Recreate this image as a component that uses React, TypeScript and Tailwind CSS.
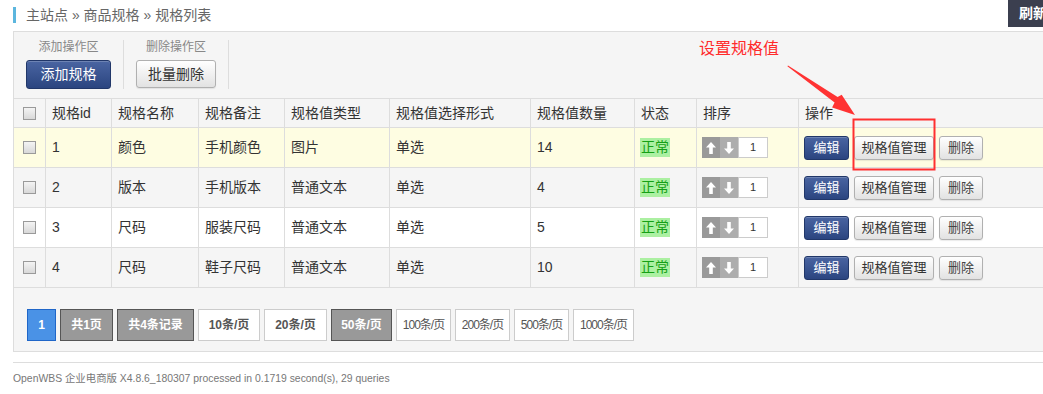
import React from "react";

type Row = {
  id: number;
  name: string;
  note: string;
  type: string;
  mode: string;
  count: number;
  bg: string;
};

const rows: Row[] = [
  { id: 1, name: "颜色", note: "手机颜色", type: "图片", mode: "单选", count: 14, bg: "bg-[#fefde2]" },
  { id: 2, name: "版本", note: "手机版本", type: "普通文本", mode: "单选", count: 4, bg: "bg-[#f5f5f5]" },
  { id: 3, name: "尺码", note: "服装尺码", type: "普通文本", mode: "单选", count: 5, bg: "bg-white" },
  { id: 4, name: "尺码", note: "鞋子尺码", type: "普通文本", mode: "单选", count: 10, bg: "bg-[#f5f5f5]" },
];

// column widths incl. the right border line
const cols = ["w-[32px]", "w-[66px]", "w-[87px]", "w-[86px]", "w-[105px]", "w-[141px]", "w-[104px]", "w-[62px]", "w-[102px]", "flex-1"];
const heads = ["", "规格id", "规格名称", "规格备注", "规格值类型", "规格值选择形式", "规格值数量", "状态", "排序", "操作"];

function Checkbox() {
  return (
    <span className="block w-[13px] h-[13px] border border-[#9a9a9a] bg-linear-to-b from-[#f4f4f4] to-[#d8d8d8]" />
  );
}

function Arrow({ up }: { up?: boolean }) {
  return (
    <svg width="10" height="12" viewBox="0 0 10 12" className={up ? "" : "rotate-180"}>
      <path d="M5 0 L10 5.5 L6.8 5.5 L6.8 12 L3.2 12 L3.2 5.5 L0 5.5 Z" fill="#fff" />
    </svg>
  );
}

function BlueBtn({ children, className = "" }: { children: React.ReactNode; className?: string }) {
  return (
    <button className={`rounded-[3px] border border-[#213769] bg-linear-to-b from-[#4a65a2] to-[#2b4580] text-white shadow-[inset_0_1px_0_rgba(255,255,255,0.2)] ${className}`}>
      {children}
    </button>
  );
}

function GrayBtn({ children, className = "" }: { children: React.ReactNode; className?: string }) {
  return (
    <button className={`rounded-[3px] border border-[#b0b0b0] bg-linear-to-b from-white to-[#e2e2e2] text-[#333] shadow-[0_1px_1px_rgba(0,0,0,0.08)] ${className}`}>
      {children}
    </button>
  );
}

export default function App() {
  return (
    <div className="relative w-[1043px] h-[394px] overflow-hidden bg-white text-[#333] font-['Liberation_Sans','Noto_Sans_CJK_SC',sans-serif]">
      {/* Breadcrumb */}
      <div className="flex justify-between h-[31px]">
        <div className="flex items-center pl-[13px] pb-[1px]">
          <span className="w-[3px] h-[16px] bg-[#5cb6de]" />
          <span className="ml-[10px] text-[14px] text-[#666]">主站点 » 商品规格 » 规格列表</span>
        </div>
        <div className="h-[27px] w-[35px] overflow-hidden bg-[#3b3f4f] pl-[11px] text-[14px] font-bold leading-[27px] text-white whitespace-nowrap">
          刷新
        </div>
      </div>

      {/* Main box */}
      <div className="ml-[13px] w-[1100px] border-t border-l border-b border-[#ddd] bg-[#f5f5f5]">
        {/* Toolbar */}
        <div className="flex h-[67px] border-b border-[#ddd] pt-[8px]">
          <div className="flex flex-col items-center px-[12px]">
            <span className="text-[12px] leading-[14px] text-[#888]">添加操作区</span>
            <BlueBtn className="mt-[6px] h-[29px] w-[85px] text-[14px]">添加规格</BlueBtn>
          </div>
          <div className="w-px h-[49px] bg-[#ddd]" />
          <div className="flex flex-col items-center px-[12px]">
            <span className="text-[12px] leading-[14px] text-[#888]">删除操作区</span>
            <GrayBtn className="mt-[6px] h-[28px] w-[80px] text-[14px]">批量删除</GrayBtn>
          </div>
          <div className="w-px h-[49px] bg-[#ddd]" />
        </div>

        {/* Table header */}
        <div className="flex h-[29px] border-b border-[#ddd] text-[14px]">
          {heads.map((h, i) => (
            <div key={i} className={`${cols[i]} flex items-center border-r border-[#ddd] ${i === 0 ? "justify-center" : "pl-[6px]"}`}>
              {i === 0 ? <Checkbox /> : h}
            </div>
          ))}
        </div>

        {/* Table rows */}
        {rows.map((r) => (
          <div key={r.id} className={`flex h-[40px] border-b border-[#ddd] text-[14px] ${r.bg}`}>
            <div className={`${cols[0]} flex items-center justify-center border-r border-[#ddd]`}>
              <Checkbox />
            </div>
            <div className={`${cols[1]} flex items-center pl-[6px] border-r border-[#ddd]`}>{r.id}</div>
            <div className={`${cols[2]} flex items-center pl-[6px] border-r border-[#ddd]`}>{r.name}</div>
            <div className={`${cols[3]} flex items-center pl-[6px] border-r border-[#ddd]`}>{r.note}</div>
            <div className={`${cols[4]} flex items-center pl-[6px] border-r border-[#ddd]`}>{r.type}</div>
            <div className={`${cols[5]} flex items-center pl-[6px] border-r border-[#ddd]`}>{r.mode}</div>
            <div className={`${cols[6]} flex items-center pl-[6px] border-r border-[#ddd]`}>{r.count}</div>
            <div className={`${cols[7]} flex items-center pl-[5px] border-r border-[#ddd]`}>
              <span className="bg-[#acf0a2] px-[1px] text-[14px] leading-[19px] text-[#15a015]">正常</span>
            </div>
            <div className={`${cols[8]} flex items-center pl-[5px] border-r border-[#ddd]`}>
              <span className="flex h-[21px] w-[18px] items-center justify-center bg-[#999]">
                <Arrow up />
              </span>
              <span className="flex h-[21px] w-[18px] items-center justify-center bg-[#adadad]">
                <Arrow />
              </span>
              <span className="flex h-[21px] w-[30px] items-center justify-center border border-[#ccc] bg-white text-[11px]">1</span>
            </div>
            <div className="flex-1 flex items-center gap-[5px] pl-[5px]">
              <BlueBtn className="h-[24px] w-[45px] text-[13px]">编辑</BlueBtn>
              <GrayBtn className="h-[24px] w-[80px] text-[13px]">规格值管理</GrayBtn>
              <GrayBtn className="h-[24px] w-[44px] text-[13px] text-[#444]">删除</GrayBtn>
            </div>
          </div>
        ))}

        {/* Pagination */}
        <div className="flex h-[63px] items-start gap-[4px] pl-[13px] pt-[21px] text-[12px] font-bold">
          <span className="flex h-[32px] w-[29px] items-center justify-center border border-[#1f66c8] bg-[#4a92e6] text-white">1</span>
          <span className="flex h-[32px] w-[53px] items-center justify-center border border-[#555] bg-[#999] text-white">共1页</span>
          <span className="flex h-[32px] w-[77px] items-center justify-center border border-[#555] bg-[#999] text-white">共4条记录</span>
          <span className="flex h-[32px] w-[62px] items-center justify-center border border-[#ccc] bg-white text-[#555]">10条/页</span>
          <span className="flex h-[32px] w-[63px] items-center justify-center border border-[#ccc] bg-white text-[#555]">20条/页</span>
          <span className="flex h-[32px] w-[61px] items-center justify-center border border-[#555] bg-[#999] text-white">50条/页</span>
          <span className="flex h-[32px] w-[55px] items-center justify-center border border-[#ccc] bg-white text-[12px] font-normal tracking-[-1px] text-[#555]">100条/页</span>
          <span className="flex h-[32px] w-[55px] items-center justify-center border border-[#ccc] bg-white text-[12px] font-normal tracking-[-1px] text-[#555]">200条/页</span>
          <span className="flex h-[32px] w-[55px] items-center justify-center border border-[#ccc] bg-white text-[12px] font-normal tracking-[-1px] text-[#555]">500条/页</span>
          <span className="flex h-[32px] w-[61px] items-center justify-center border border-[#ccc] bg-white text-[12px] font-normal tracking-[-1px] text-[#555]">1000条/页</span>
        </div>
      </div>

      {/* Footer */}
      <div className="ml-[13px] mt-[10px] border-t border-[#ddd] pt-[10px] text-[10.4px] leading-[12px] text-[#777]">
        OpenWBS 企业电商版 X4.8.6_180307 processed in 0.1719 second(s), 29 queries
      </div>

      {/* Annotation overlay */}
      <span className="absolute left-[699px] top-[39px] text-[16px] leading-[20px] text-[#ff2b2b]">设置规格值</span>
      <svg className="absolute left-0 top-0 pointer-events-none" width="1043" height="394">
        <polygon
          points="788,65.5 837.6,96.9 841.7,94.7 855,115 832.1,107.5 834.6,102.6 787.4,66.3"
          fill="#ff3333"
        />
        <rect x="853.5" y="119.5" width="81" height="50" fill="none" stroke="#ff3030" strokeWidth="2" />
      </svg>
    </div>
  );
}
